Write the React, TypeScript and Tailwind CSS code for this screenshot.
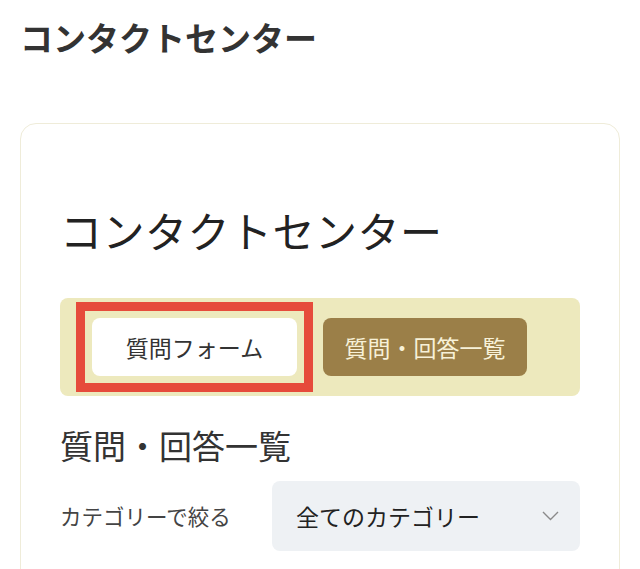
import React from 'react'

const Chevron = () => (
  <svg width="17" height="10" viewBox="0 0 17 10" fill="none">
    <polyline points="1,1 8.5,8.5 16,1" stroke="#8a8a8a" strokeWidth="1.4" />
  </svg>
)

const App = () => {
  return (
    <div className="min-h-screen bg-white px-5 pt-[13px] font-['Noto_Sans_CJK_JP',sans-serif]">
      <h1 className="text-[33px] leading-[48px] font-bold text-[#333]">コンタクトセンター</h1>

      <div className="mt-[62px] rounded-2xl border border-[#efecd9] px-[39px] pt-[74px] pb-[120px]">
        <h2 className="text-[42px] leading-[63px] font-normal text-[#222] tracking-[0.5px]">コンタクトセンター</h2>

        <div className="mt-[37px] flex gap-[26px] rounded-lg bg-[#ede9bd] px-8 py-5">
          <div className="relative">
            <button className="h-[58px] w-[205px] rounded-lg bg-white text-[23px] text-[#333]">
              質問フォーム
            </button>
            <span className="pointer-events-none absolute -inset-[16px] border-[9px] border-[#e64b3b]"></span>
          </div>
          <button className="h-[58px] w-[204px] rounded-lg bg-[#9b7f48] text-[23px] text-[#f7f1d8]">
            質問・回答一覧
          </button>
        </div>

        <h3 className="mt-[25px] text-[33px] leading-[48px] font-normal text-[#333]">質問・回答一覧</h3>

        <div className="mt-3 flex items-center">
          <span className="w-[212px] text-[21.5px] text-[#444]">カテゴリーで絞る</span>
          <div className="flex h-[70px] w-[308px] items-center justify-between rounded-lg bg-[#eef1f4] pl-6 pr-[21px]">
            <span className="text-[23px] text-[#222]">全てのカテゴリー</span>
            <Chevron />
          </div>
        </div>
      </div>
    </div>
  )
}

export default App
